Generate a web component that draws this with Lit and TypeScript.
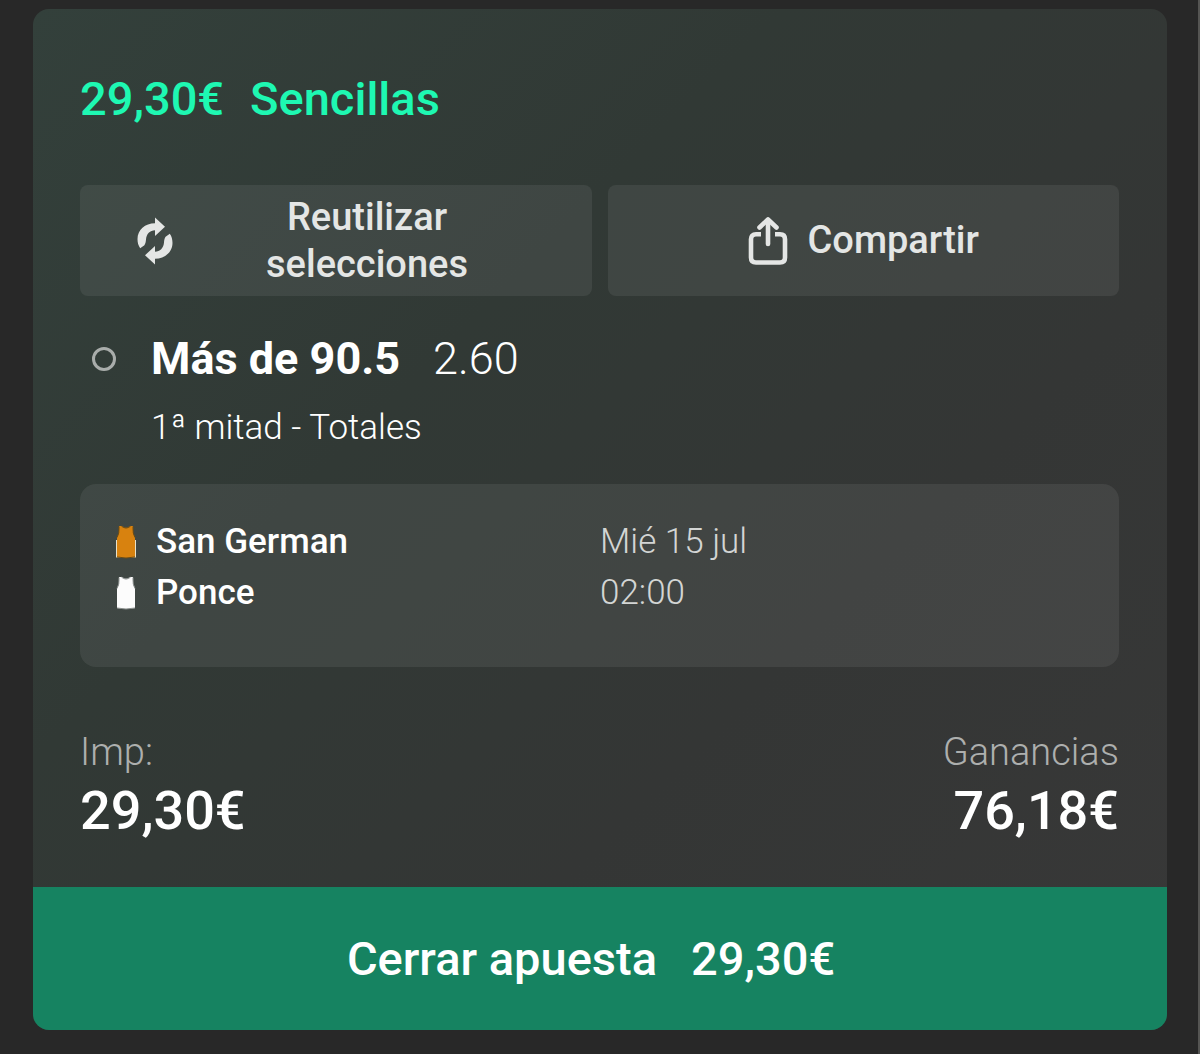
import { LitElement, html, css, svg } from "lit";
import { customElement, property } from "lit/decorators.js";

const reuseIcon = svg`
  <svg class="reuse-icon" viewBox="0 0 36 48" fill="currentColor" aria-hidden="true">
    <path d="M18 .5 28 9.700 18 19V13.300C13 13.300 9.400 17 9 22.500C8.800 24.800 8.600 26.400 7.400 28.200L3.200 31.200C1.300 28.500.500 25.500.500 22C.500 13 8 6.300 18 6.300Z"/>
    <path d="M18 .5 28 9.700 18 19V13.300C13 13.300 9.400 17 9 22.500C8.800 24.800 8.600 26.400 7.400 28.200L3.200 31.200C1.300 28.500.500 25.500.500 22C.500 13 8 6.300 18 6.300Z" transform="rotate(180 18 24)"/>
  </svg>`;

const shareIcon = svg`
  <svg class="share-icon" viewBox="0 0 40 50" fill="none" stroke="currentColor" stroke-width="4.600" aria-hidden="true">
    <path d="M13 18.300H8Q3 18.300 3 23.300V41.500Q3 46.500 8 46.500H32Q37 46.500 37 41.500V23.300Q37 18.300 32 18.300H27"/>
    <path d="M20 28V4" stroke-linecap="round"/>
    <path d="M11.500 11.500 20 3.500 28.500 11.500" stroke-linecap="round" stroke-linejoin="round"/>
  </svg>`;

@customElement("team-row")
export class TeamRow extends LitElement {
  @property() name = "";
  @property() kit = "white";

  static styles = css`
    :host { display: flex; align-items: center; height: 51px; }
    .kit { width: 22px; height: 34px; margin-right: 19px; flex: none; }
    .name { font-size: 35px; line-height: 51px; font-weight: 500; color: #fff; letter-spacing: 0; }
  `;

  render() {
    const orange = this.kit === "orange";
    const fill = orange ? "#d8820f" : "#fcfcfc";
    const trim = orange ? "#6b4c16" : "#8a8f8d";
    return html`
      <svg class="kit" viewBox="0 0 22 34" aria-hidden="true">
        ${orange ? svg`<path d="M1 15H21V32.500H1Z" fill="#e9e1c8"/>` : ""}
        <path d="M4 1H7Q11 4.500 15 1H18Q17.500 9 20 12.500V32Q11 34 2 32V12.500Q4.500 9 4 1Z" fill=${fill}/>
        <path d="M6.500 1.200Q11 4.800 15.500 1.200M4 1.500Q4.500 9 2 12.500M18 1.500Q17.500 9 20 12.500" fill="none" stroke=${trim} stroke-width="1"/>
        <path d="M2 32Q11 34 20 32" fill="none" stroke=${trim} stroke-width="1"/>
      </svg>
      <span class="name">${this.name}</span>
    `;
  }
}

@customElement("app-root")
export class AppRoot extends LitElement {
  static styles = css`
    :host {
      display: block;
      box-sizing: border-box;
      height: 1054px;
      padding: 9px 31px 24px 33px;
      background: #282828;
      border-right: 2px solid #555553;
      font-family: Roboto, sans-serif;
      color: #fff;
    }
    .card {
      display: flex;
      flex-direction: column;
      height: 1021px;
      border-radius: 16px;
      overflow: hidden;
      background: linear-gradient(135deg, #33403b 0%, #313935 35%, #343635 65%, #383838 100%);
    }
    .body { flex: 1; padding: 60px 48px 0 47px; }
    .title {
      display: flex;
      gap: 26px;
      height: 60px;
      line-height: 60px;
      font-size: 47px;
      font-weight: 500;
      color: #1ef8b2;
    }
    .actions { display: grid; grid-template-columns: 1fr 1fr; gap: 16px; margin-top: 56px; }
    .btn {
      display: flex;
      align-items: center;
      height: 111px;
      border-radius: 8px;
      background: rgba(255, 255, 255, 0.07);
      color: #e4e6e5;
      font-size: 38px;
      font-weight: 500;
      line-height: 47px;
    }
    .reuse { padding-left: 57px; }
    .reuse-icon { width: 36px; height: 48px; }
    .reuse-label { width: 202px; margin-left: 93px; text-align: center; }
    .share { justify-content: center; gap: 20px; }
    .share-icon { width: 40px; height: 50px; }
    .pick { display: grid; grid-template-columns: 71px 1fr; align-items: center; margin-top: 32px; }
    .ring {
      box-sizing: border-box;
      width: 24px;
      height: 24px;
      margin-left: 12px;
      border: 3px solid #a9adab;
      border-radius: 50%;
    }
    .selection { display: flex; gap: 33px; font-size: 45px; line-height: 62px; }
    .selection-name { font-weight: 700; }
    .odds { font-weight: 300; }
    .market { grid-column: 2; margin-top: 14px; font-size: 35px; line-height: 48px; font-weight: 300; }
    .match {
      display: grid;
      grid-template-columns: 485px 1fr;
      box-sizing: border-box;
      height: 183px;
      margin-top: 32px;
      padding: 32px 35px;
      border-radius: 16px;
      background: rgba(255, 255, 255, 0.07);
    }
    .when { font-size: 35px; line-height: 51px; font-weight: 300; color: #d3d5d4; }
    .totals { display: flex; justify-content: space-between; margin-top: 61px; }
    .total.right { text-align: right; }
    .label { font-size: 38px; line-height: 48px; font-weight: 300; color: #adafae; }
    .amount { font-size: 54px; line-height: 70px; font-weight: 500; }
    .cashout {
      display: flex;
      justify-content: center;
      align-items: center;
      gap: 34px;
      height: 143px;
      padding-right: 18px;
      background: #168361;
      font-size: 47px;
      font-weight: 500;
    }
  `;

  render() {
    return html`
      <section class="card">
        <div class="body">
          <div class="title"><span>29,30€</span><span>Sencillas</span></div>
          <div class="actions">
            <div class="btn reuse">${reuseIcon}<span class="reuse-label">Reutilizar selecciones</span></div>
            <div class="btn share">${shareIcon}<span class="share-label">Compartir</span></div>
          </div>
          <div class="pick">
            <span class="ring"></span>
            <div class="selection">
              <span class="selection-name">Más de 90.5</span><span class="odds">2.60</span>
            </div>
            <div class="market">1ª mitad - Totales</div>
          </div>
          <div class="match">
            <div>
              <team-row name="San German" kit="orange"></team-row>
              <team-row name="Ponce" kit="white"></team-row>
            </div>
            <div class="when"><div>Mié 15 jul</div><div>02:00</div></div>
          </div>
          <div class="totals">
            <div class="total"><div class="label">Imp:</div><div class="amount">29,30€</div></div>
            <div class="total right"><div class="label">Ganancias</div><div class="amount">76,18€</div></div>
          </div>
        </div>
        <div class="cashout"><span>Cerrar apuesta</span><span>29,30€</span></div>
      </section>
    `;
  }
}
